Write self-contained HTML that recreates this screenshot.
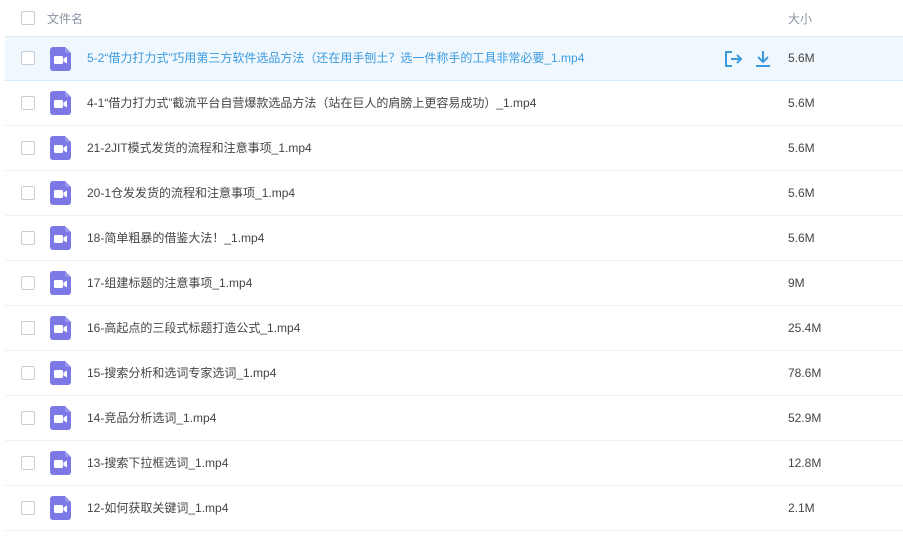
<!DOCTYPE html>
<html><head><meta charset="utf-8"><style>
*{margin:0;padding:0;box-sizing:border-box}
body{width:903px;height:537px;background:#fff;font-family:"Liberation Sans","Noto Sans CJK SC",sans-serif;font-size:12px;color:#454545;overflow:hidden;position:relative}
.hdr{position:absolute;left:0;top:0;width:903px;height:36px}
.cb{position:absolute;left:21px;width:14px;height:14px;border:1px solid #c8ccd4;border-radius:2px;background:#fff}
.row{position:absolute;left:5px;width:898px;height:45px;border-bottom:1px solid #eef0f4}
.row.sel{background:#f1f8fd;border-top:1px solid #d5e9f7;border-bottom:1px solid #d5e9f7}
.row .cb{left:16px;top:15px}
.ic{position:absolute;left:45px;top:10px;width:21px;height:24px}
.nm{position:absolute;left:82px;top:0;line-height:44px;white-space:nowrap}
.sz{position:absolute;left:783px;top:0;line-height:44px}
.sel .nm{color:#3a9ae0}
</style></head><body>
<div class="hdr"><div class="cb" style="top:11px"></div><span style="position:absolute;left:47px;top:10px;color:#8a93a4">文件名</span><span style="position:absolute;left:788px;top:10px;color:#8a93a4">大小</span></div>
<div id="rows"></div>
<script>
var d=[["5-2“借力打力式”巧用第三方软件选品方法（还在用手刨土？选一件称手的工具非常必要_1.mp4","5.6M"],["4-1“借力打力式”截流平台自营爆款选品方法（站在巨人的肩膀上更容易成功）_1.mp4","5.6M"],["21-2JIT模式发货的流程和注意事项_1.mp4","5.6M"],["20-1仓发发货的流程和注意事项_1.mp4","5.6M"],["18-简单粗暴的借鉴大法！_1.mp4","5.6M"],["17-组建标题的注意事项_1.mp4","9M"],["16-高起点的三段式标题打造公式_1.mp4","25.4M"],["15-搜索分析和选词专家选词_1.mp4","78.6M"],["14-竞品分析选词_1.mp4","52.9M"],["13-搜索下拉框选词_1.mp4","12.8M"],["12-如何获取关键词_1.mp4","2.1M"]];
var ic='<svg class="ic" viewBox="0 0 21 24"><path d="M3 0h12l6 6v15a3 3 0 0 1-3 3H3a3 3 0 0 1-3-3V3a3 3 0 0 1 3-3z" fill="#7c79e6"/><path d="M15 0l6 6h-4a2 2 0 0 1-2-2z" fill="#9896ec"/><rect x="4" y="9" width="9" height="8" rx="1.2" fill="#fff"/><path d="M13.5 11.5l3.5-2v7l-3.5-2z" fill="#fff"/></svg>';
var h='';d.forEach(function(r,i){var t=36+i*45;var s=i==0;
h+='<div class="row'+(s?' sel':'')+'" style="top:'+t+'px"><div class="cb"'+(s?' style="top:14px"':'')+'></div>'+ic+'<div class="nm"'+(s?' style="line-height:43px"':'')+'>'+r[0]+'</div><div class="sz"'+(s?' style="line-height:43px"':'')+'>'+r[1]+'</div>'+
(s?'<svg style="position:absolute;left:718px;top:13px" width="20" height="18" viewBox="0 0 20 18" fill="none" stroke="#3a9ae0" stroke-width="2"><path d="M9 2H3v14h6"/><path d="M8 9h10M14 5l4 4-4 4"/></svg><svg style="position:absolute;left:749px;top:13px" width="18" height="18" viewBox="0 0 18 18" fill="none" stroke="#3a9ae0" stroke-width="2"><path d="M9 1v11M4 7l5 5 5-5M2 16h14"/></svg>':'')+'</div>';});
document.getElementById('rows').innerHTML=h;
</script>
</body></html>
